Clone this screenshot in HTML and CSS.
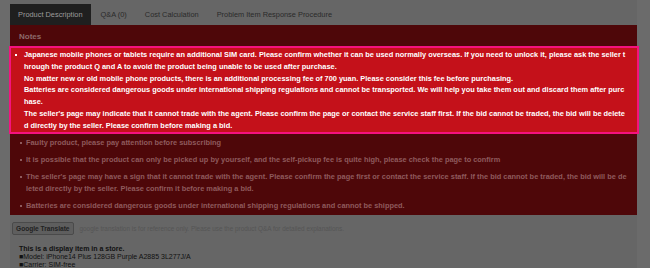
FILE: index.html
```html
<!DOCTYPE html>
<html>
<head>
  <meta charset="UTF-8">
  <title>Item Detail</title>
  <link rel="stylesheet" href="styles.css">
</head>
<body>
  <div class="page">
    <nav class="tabs">
      <a class="tab active" href="#">Product Description</a>
      <a class="tab" href="#">Q&amp;A (0)</a>
      <a class="tab" href="#">Cost Calculation</a>
      <a class="tab" href="#">Problem Item Response Procedure</a>
    </nav>
    <div class="notes">
      <h3>Notes</h3>
      <div class="spotlight">
        <ul>
          <li>Japanese mobile phones or tablets require an additional SIM card. Please confirm whether it can be used normally overseas. If you need to unlock it, please ask the seller through the product Q and A to avoid the product being unable to be used after purchase.<br>No matter new or old mobile phone products, there is an additional processing fee of 700 yuan. Please consider this fee before purchasing.<br>Batteries are considered dangerous goods under international shipping regulations and cannot be transported. We will help you take them out and discard them after purchase.<br>The seller's page may indicate that it cannot trade with the agent. Please confirm the page or contact the service staff first. If the bid cannot be traded, the bid will be deleted directly by the seller. Please confirm before making a bid.</li>
        </ul>
      </div>
      <ul class="dim-list">
        <li>Faulty product, please pay attention before subscribing</li>
        <li>It is possible that the product can only be picked up by yourself, and the self-pickup fee is quite high, please check the page to confirm</li>
        <li>The seller's page may have a sign that it cannot trade with the agent. Please confirm the page first or contact the service staff. If the bid cannot be traded, the bid will be deleted directly by the seller. Please confirm it before making a bid.</li>
        <li>Batteries are considered dangerous goods under international shipping regulations and cannot be shipped.</li>
      </ul>
    </div>
    <div class="translate">
      <button type="button">Google Translate</button>
      <span>google translation is for reference only. Please use the product Q&amp;A for detailed explanations.</span>
    </div>
    <div class="desc">
      <b>This is a display item in a store.</b><br>
      ■Model: iPhone14 Plus 128GB Purple A2885 3L277J/A<br>
      ■Carrier: SIM-free
    </div>
  </div>
</body>
</html>
```

FILE: styles.css
```css
body {
  margin: 0;
  padding: 0;
  background-color: #6b6b6b;
  font-family: "Liberation Sans", Arial, sans-serif;
  height: 268px;
  overflow: hidden;
}

.page {
  margin-left: 10px;
  width: 627px;
  height: 268px;
  background-color: #666;
}

.tabs {
  display: flex;
  padding-top: 4px;
  height: 21px;
}

.tab {
  display: flex;
  align-items: center;
  padding: 0 8px;
  font-size: 7.4px;
  color: #2a2a2a;
  text-decoration: none;
  margin-right: 2px;
}

.tab.active {
  background-color: #1f1f1f;
  color: #9c9c9c;
}

.notes {
  background-color: #4e0709;
  padding: 0 0 3px 0;
}

.notes h3 {
  margin: 0;
  padding: 7px 9px 0;
  height: 14px;
  font-size: 8px;
  color: #8c6a6b;
}

.spotlight {
  margin: 0 -2px 0 -1px;
  border: 2px solid #f5127f;
  background-color: #c4111a;
  padding: 1px 9px 0 2px;
}

.spotlight ul,
.dim-list {
  list-style: none;
  margin: 0;
  padding: 0;
}

.spotlight li {
  position: relative;
  padding-left: 11px;
  font-size: 7.4px;
  font-weight: bold;
  line-height: 11.8px;
  color: #fff;
  word-break: break-all;
}

.spotlight li::before,
.dim-list li::before {
  content: "";
  position: absolute;
  left: 2px;
  top: 5px;
  width: 2px;
  height: 2px;
  background-color: currentColor;
}

.dim-list {
  padding: 3px 9px 0 16px;
}

.dim-list li {
  position: relative;
  font-size: 7.4px;
  font-weight: bold;
  line-height: 12px;
  color: #8e5a5d;
  margin-bottom: 5px;
  word-break: break-all;
}

.dim-list li::before {
  left: -6px;
}

.dim-list li:last-child {
  margin-bottom: 0;
}

.translate {
  display: flex;
  align-items: center;
  gap: 6px;
  padding: 7px 0 0 2px;
}

.translate button {
  font-family: inherit;
  font-size: 6.6px;
  font-weight: bold;
  color: #222;
  background-color: #5e5e5e;
  border: 1px solid #4a4a4a;
  border-radius: 2px;
  padding: 2px 3px;
  height: 13px;
}

.translate span {
  font-size: 6.4px;
  color: #555;
}

.desc {
  padding: 10px 0 0 9px;
  font-size: 7px;
  line-height: 8.4px;
  color: #111;
}
```
